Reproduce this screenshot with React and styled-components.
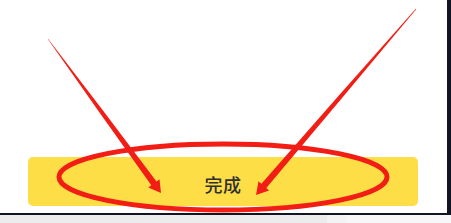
import React from 'react'
import styled, { createGlobalStyle } from 'styled-components'

const GlobalStyle = createGlobalStyle`
  html, body {
    margin: 0;
    padding: 0;
    background: #ececec;
  }
  body {
    font-family: "Noto Sans CJK SC", "Noto Sans", sans-serif;
  }
`

// tapered arrow as one polygon: thin tail, swelling shaft, triangular head
function arrowPoints(x1, y1, x2, y2, w0, wMid, w1, headLen, headW) {
  const dx = x2 - x1
  const dy = y2 - y1
  const len = Math.hypot(dx, dy)
  const ux = dx / len
  const uy = dy / len
  const nx = -uy
  const ny = ux
  const bx = x2 - ux * headLen
  const by = y2 - uy * headLen
  const mx = x1 + (bx - x1) * 0.5
  const my = y1 + (by - y1) * 0.5
  const p = (x, y) => `${x.toFixed(1)},${y.toFixed(1)}`
  return [
    p(x1 + nx * w0 / 2, y1 + ny * w0 / 2),
    p(mx + nx * wMid / 2, my + ny * wMid / 2),
    p(bx + nx * w1 / 2, by + ny * w1 / 2),
    p(bx + nx * headW / 2, by + ny * headW / 2),
    p(x2, y2),
    p(bx - nx * headW / 2, by - ny * headW / 2),
    p(bx - nx * w1 / 2, by - ny * w1 / 2),
    p(mx - nx * wMid / 2, my - ny * wMid / 2),
    p(x1 - nx * w0 / 2, y1 - ny * w0 / 2),
  ].join(' ')
}

function App() {
  return (
    <>
      <GlobalStyle />
      <Screen>
        <Top>
          <Panel>
            <DoneButton>完成</DoneButton>
            <Marks width="447" height="213" viewBox="0 0 447 213">
              <ellipse cx="223" cy="177" rx="164" ry="33" fill="none" stroke="#f21d14" strokeWidth="5" />
              <polygon points={arrowPoints(48, 39, 161, 193, 0.5, 4, 6.5, 12, 14)} fill="#f21d14" />
              <polygon points={arrowPoints(416, 9, 256, 195, 0.5, 4, 6.5, 12, 14)} fill="#f21d14" />
            </Marks>
          </Panel>
          <Edge />
        </Top>
        <Rule />
        <Footer>
          <FooterPart $tone="#ececec" $grow />
          <FooterPart $tone="#f3f3f3" $w="20px" />
          <FooterPart $tone="#f7f7f7" $w="104px" />
        </Footer>
      </Screen>
    </>
  )
}

export default App

const Screen = styled.div`
  width: 451px;
  height: 223px;
  display: flex;
  flex-direction: column;
  overflow: hidden;
`
const Top = styled.div`
  display: flex;
  height: 213px;
`
const Panel = styled.div`
  position: relative;
  width: 447px;
  background: #fff;
  padding: 157px 29px 0 28px;
  box-sizing: border-box;
`
const Edge = styled.div`
  flex: 1;
  background: #121424;
`
const Rule = styled.div`
  height: 2px;
  background: #121424;
`
const Footer = styled.div`
  flex: 1;
  display: flex;
`
const FooterPart = styled.div`
  background: ${p => p.$tone};
  ${p => (p.$grow ? 'flex: 1;' : `width: ${p.$w};`)}
`
const DoneButton = styled.div`
  height: 49px;
  border-radius: 5px;
  background: #fede46;
  display: flex;
  align-items: center;
  justify-content: center;
  color: #2f2f2f;
  font-size: 18px;
  font-weight: 500;
  letter-spacing: 0.5px;
  padding-top: 4px;
  box-sizing: border-box;
`
const Marks = styled.svg`
  position: absolute;
  left: 0;
  top: 0;
  pointer-events: none;
`
